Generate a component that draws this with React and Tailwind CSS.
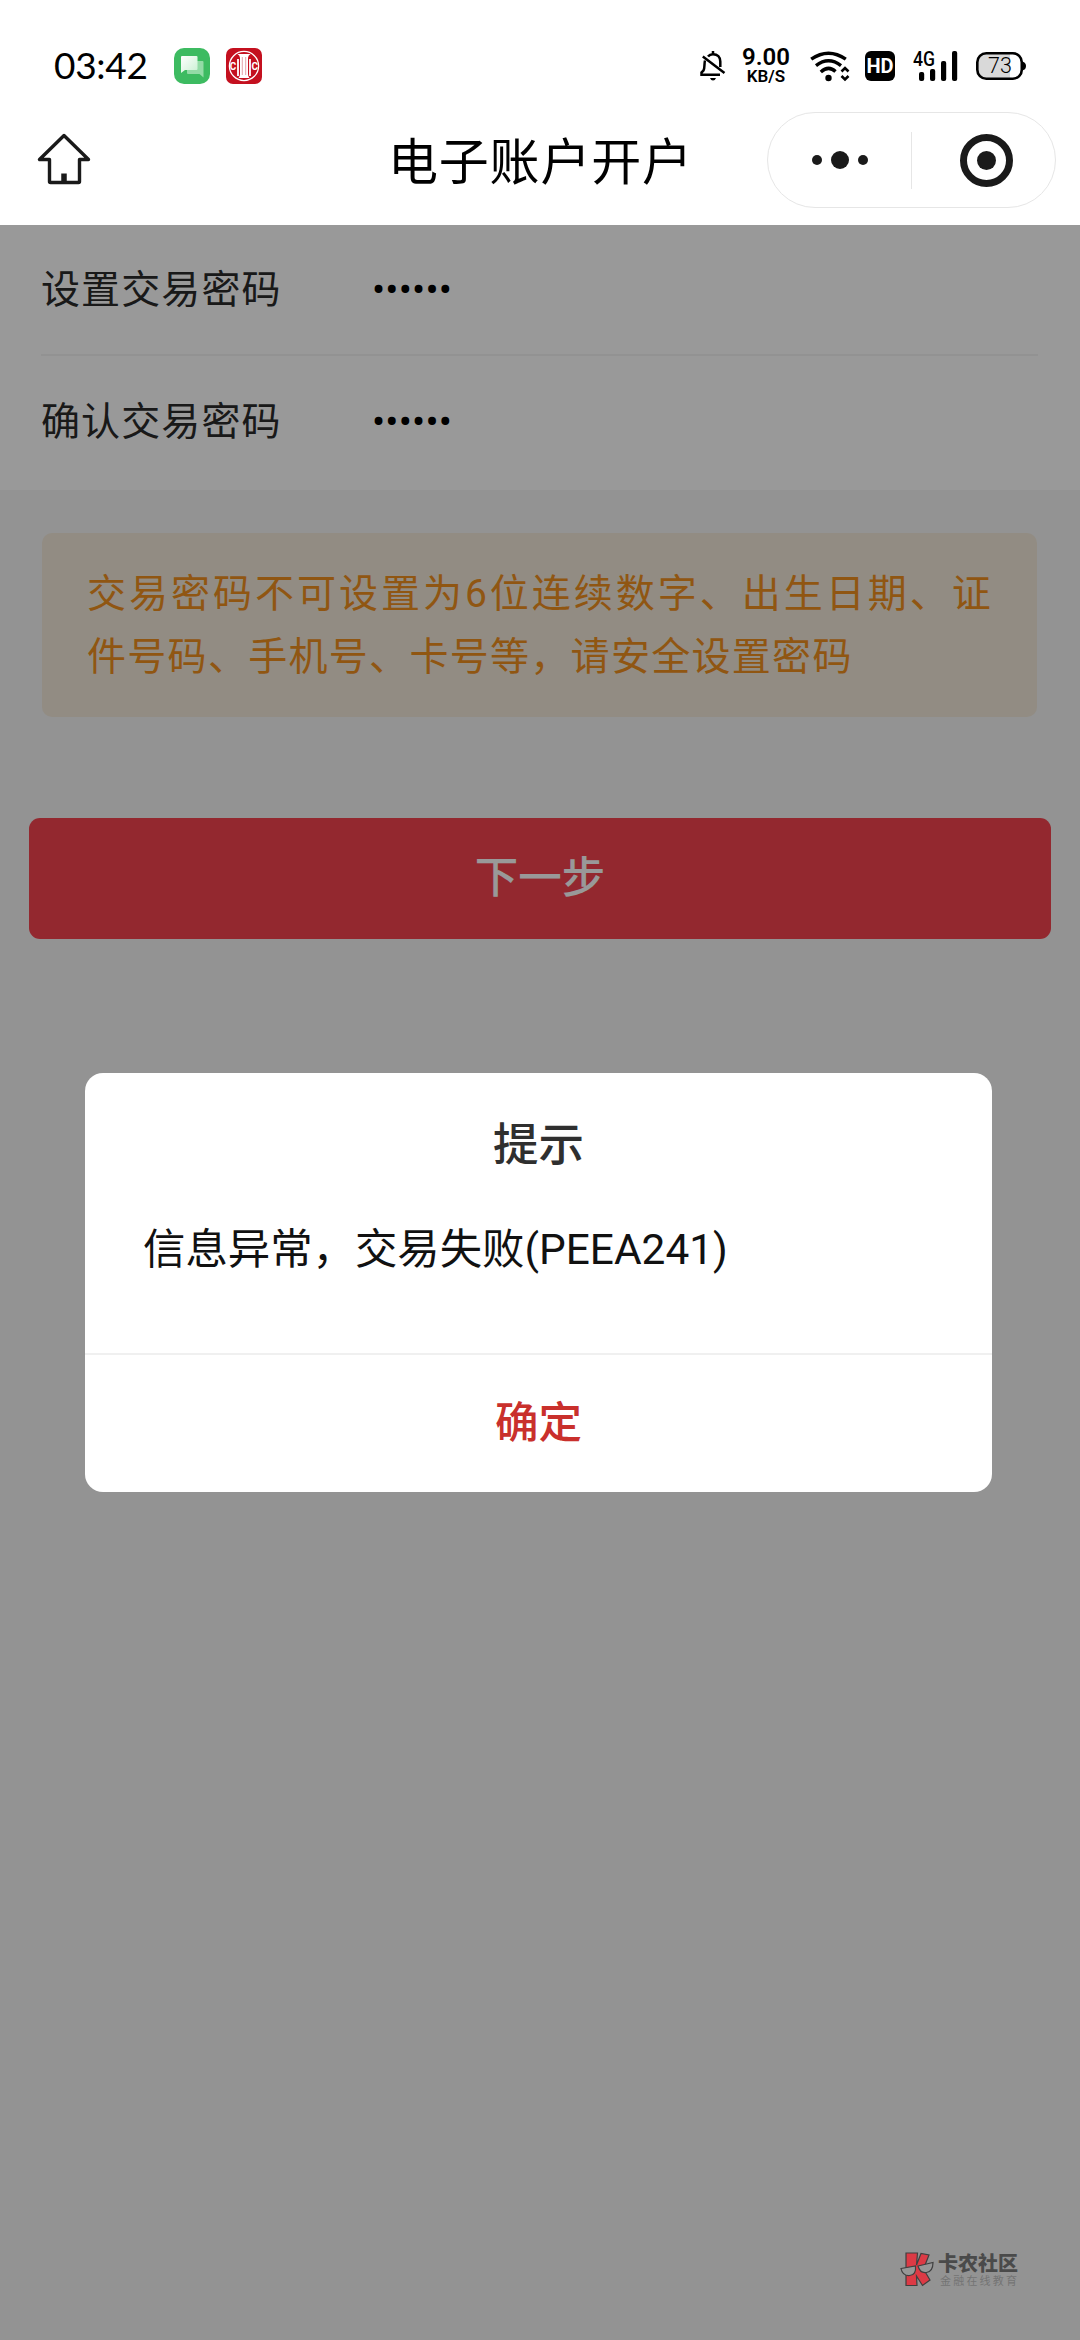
import React, { useState } from 'react';

// ── Status bar icons ──────────────────────────────────────────────────────────
function MessageIcon() {
  return (
    <svg viewBox="0 0 36 36" className="w-9 h-9">
      <defs>
        <linearGradient id="bubble" x1="0" y1="0" x2="1" y2="1">
          <stop offset="0" stopColor="#ffffff" />
          <stop offset="1" stopColor="#c9f0d2" />
        </linearGradient>
      </defs>
      <rect width="36" height="36" rx="10" fill="#3dbb61" />
      <path d="M14 13h14.500q1 0 1 1v15.500l-4-3.500H14q-1 0-1-1V14q0-1 1-1z" fill="#93dba6" />
      <path d="M8 8h14.500q1 0 1 1v12q0 1-1 1H11l-4 3V9q0-1 1-1z" fill="url(#bubble)" />
    </svg>
  );
}

function BankIcon() {
  return (
    <svg viewBox="0 0 36 36" className="w-9 h-9">
      <rect width="36" height="36" rx="7" fill="#c4101f" />
      <circle cx="18" cy="18" r="14.600" fill="none" stroke="#fff" strokeWidth="1.300" />
      <path d="M11.500 6h13q-2.500 1.500-2.500 4v16q0 2.500 1.500 4h-11q1.500-1.500 1.500-4V10q0-2.500-2.500-4z" fill="#fff" />
      <path d="M16.300 9v18M19.700 9v18" stroke="#dd8a94" strokeWidth="0.800" />
      <path d="M12 11v17M24 11v17" stroke="#fff" strokeWidth="1.800" />
      <text x="3.800" y="22" fontSize="10.500" textLength="6.500" lengthAdjust="spacingAndGlyphs" fontWeight="700" fill="#fff" fontFamily="Roboto, sans-serif">C</text>
      <text x="25.600" y="22" fontSize="10.500" textLength="6.500" lengthAdjust="spacingAndGlyphs" fontWeight="700" fill="#fff" fontFamily="Roboto, sans-serif">C</text>
    </svg>
  );
}

function MutedBellIcon() {
  return (
    <svg viewBox="0 0 26 30" className="w-[26px] h-[30px]" fill="none" stroke="#000" strokeWidth="2.500">
      <path d="M5 9.500C4 13 5 17 3.500 19.500L1.500 21.500v2.300h18.500" />
      <path d="M8 5.500C9.500 3.500 11 3.200 13 3.200c4.500 0 7.300 3 7.300 7.300V16" />
      <path d="M13 0v3.500M2.800 5.500L24.500 22" />
      <path d="M10 27h6q-1 2.500-3 2.500T10 27z" fill="#000" stroke="none" />
    </svg>
  );
}

function WifiIcon() {
  return (
    <svg viewBox="0 0 40 31" className="w-10 h-[31px]" fill="none" stroke="#000" strokeWidth="3.400">
      <path d="M1.200 8.200Q18.500-3.800 35.800 8.200" />
      <path d="M6 14.700Q18.500 5 31 14.700" />
      <path d="M10.800 21Q18.500 14 25.500 20.500" />
      <circle cx="18.500" cy="27" r="3.200" fill="#000" stroke="none" />
      <path d="M31.500 20.500l3.500-3.500 3.500 3.500M31.500 25l3.500 3.500 3.500-3.500" strokeWidth="2.600" />
    </svg>
  );
}

function SignalIcon() {
  return (
    <svg viewBox="0 -6 46 44" className="w-[46px] h-11">
      <text x="0" y="15.500" fontSize="20" fontWeight="500" textLength="22" lengthAdjust="spacingAndGlyphs" fontFamily="Roboto, sans-serif">4G</text>
      <rect x="6" y="22" width="5.200" height="9" rx="2" />
      <rect x="17" y="19" width="5.200" height="12" rx="2" />
      <rect x="28" y="11" width="5.200" height="20" rx="2" />
      <rect x="39" y="1" width="5.200" height="30" rx="2" />
    </svg>
  );
}

function BatteryIcon() {
  return (
    <svg viewBox="0 0 50 28" className="w-[50px] h-7">
      <rect x="1.300" y="1.300" width="44.500" height="25.400" rx="9" fill="#fff" />
      <path d="M10 1.300h24v25.400H10a8.700 8.700 0 0 1-8.700-8.700v-8A8.700 8.700 0 0 1 10 1.300z" fill="#d9d9d9" />
      <rect x="1.300" y="1.300" width="44.500" height="25.400" rx="9" fill="none" stroke="#000" strokeWidth="2.600" />
      <path d="M46.500 9.500q3.500 1 3.500 4.500t-3.500 4.500z" />
      <text x="24" y="21.400" fontSize="21.500" fontWeight="300" textAnchor="middle" textLength="24" fontFamily="Roboto, sans-serif">73</text>
    </svg>
  );
}

// ── Header ────────────────────────────────────────────────────────────────────
function StatusBar() {
  return (
    <div className="h-[88px] pt-11 flex items-center text-black">
      <div className="w-full h-11 flex items-center">
        <span className="ml-[54px] w-[96px] pb-[3px] font-[Lato] text-[37px] leading-none tracking-[-0.3px] whitespace-nowrap">03:42</span>
        <div className="ml-6 flex gap-4">
          <MessageIcon />
          <BankIcon />
        </div>
        <div className="ml-[438px]"><MutedBellIcon /></div>
        <div className="ml-[15px] w-[50px] flex flex-col items-center font-[Roboto]">
          <span className="text-[24px] leading-[20px] font-semibold">9.00</span>
          <span className="text-[17px] leading-[18px] font-semibold">KB/S</span>
        </div>
        <div className="ml-[19px]"><WifiIcon /></div>
        <div className="ml-[15px] size-[30px] rounded-[6px] bg-black text-white font-[Roboto] font-bold text-[20px] flex items-center justify-center">
          HD
        </div>
        <div className="ml-[18px]"><SignalIcon /></div>
        <div className="ml-[17px]"><BatteryIcon /></div>
      </div>
    </div>
  );
}

function HomeIcon() {
  return (
    <svg viewBox="0 0 54 52" className="w-[54px] h-[52px]" fill="none" stroke="#1a1a1a" strokeWidth="3.400" strokeLinejoin="round">
      <path d="M27 2.500L2.500 26.500H12.500V48.500q0 1 1 1h28q1 0 1-1V26.500H51.500z" />
      <path d="M27 40.500v8" strokeWidth="5.500" />
    </svg>
  );
}

function NavBar() {
  return (
    <div className="h-[137px] pt-[5px] flex items-center">
      <div className="w-[388px] pl-[37px] pb-px"><HomeIcon /></div>
      <h1 className="w-[379px] pt-[7px] text-[50px] leading-[60px] tracking-[0.8px] text-black whitespace-nowrap">电子账户开户</h1>
      <div className="w-[289px] h-24 mt-[6px] mb-1 rounded-full border border-[#e6e6e6] flex items-center">
        <div className="w-[143px] flex items-center justify-center gap-[9px]">
          <i className="size-[10px] rounded-full bg-[#1a1a1a]" />
          <i className="size-[18px] rounded-full bg-[#1a1a1a]" />
          <i className="size-[10px] rounded-full bg-[#1a1a1a]" />
        </div>
        <div className="w-px h-[57px] bg-[#e6e6e6]" />
        <div className="flex-1 flex justify-center pl-[5px]">
          <div className="size-[53px] rounded-full border-[7px] border-[#1a1a1a] flex items-center justify-center">
            <i className="size-[19px] rounded-full bg-[#1a1a1a]" />
          </div>
        </div>
      </div>
    </div>
  );
}

// ── Form ──────────────────────────────────────────────────────────────────────
function PasswordRow({ label, value }) {
  return (
    <div className="flex items-center h-[129px] pt-[2px] text-[39px] tracking-[1.1px]">
      <label className="w-[331px] text-[#2b2b2b]">{label}</label>
      <span className="font-[Roboto] tracking-[0.2px] text-black">{'•'.repeat(value.length)}</span>
    </div>
  );
}

function PasswordForm() {
  return (
    <main className="bg-[#f5f5f5] h-full">
      <section className="bg-white pl-[41px] pr-[42px] h-[265px]">
        <PasswordRow label="设置交易密码" value="000000" />
        <div className="h-[2px] mb-px bg-[#f3f3f3]" />
        <PasswordRow label="确认交易密码" value="000000" />
      </section>
      <div className="mt-[43px] ml-[42px] mr-[43px] h-[184px] rounded-[10px] bg-[#f3eadb] px-[45px] pt-[30px]">
        <p className="text-[39px] leading-[63px] tracking-[1.3px] text-justify text-[#f0901e]">
          交易密码不可设置为6位连续数字、出生日期、证件号码、手机号、卡号等，请安全设置密码
        </p>
      </div>
      <button className="block mt-[101px] mx-[29px] w-[1022px] h-[121px] pt-px rounded-[11px] bg-[#f5434f] text-white text-[43.5px] font-medium">
        下一步
      </button>
    </main>
  );
}

// ── Dialog ────────────────────────────────────────────────────────────────────
function AlertDialog({ title, message, onConfirm }) {
  return (
    <div className="absolute inset-0 bg-black/40 flex items-center justify-center">
      <div className="w-[907px] h-[419px] -ml-[3px] rounded-[18px] bg-white flex flex-col">
        <h2 className="mt-[41px] text-center text-[45.5px] leading-[64px] font-medium text-[#2f2f2f]">{title}</h2>
        <p className="mt-[40px] pl-[58px] text-[42.4px] leading-[64px] text-[#111]">{message}</p>
        <button
          onClick={onConfirm}
          className="mt-auto h-[139px] border-t-2 border-[#f0f0f0] text-[43.5px] font-medium text-[#c9302c]"
        >
          确定
        </button>
      </div>
    </div>
  );
}

function Watermark() {
  return (
    <div className="absolute left-[900px] top-[2251px] flex items-center gap-1">
      <svg viewBox="0 0 34 38" className="w-[34px] h-[38px]">
        <g fill="#dc3a45" stroke="#3f3f3f" strokeWidth="1.200">
          <path d="M6 2h11.500l-1 12L21 2.500l8 1.500-5.500 14L30 29l-7.500 5.500L16.500 25l.5 9.500H6z" />
        </g>
        <path d="M1 17.500l14.500-2.500q1 9-6 9.500T1 17.500zM18 15l15-3.500q0 9-6.500 10T18 15z" fill="#979797" stroke="#3f3f3f" strokeWidth="1.200" />
      </svg>
      <div className="pt-[2px] whitespace-nowrap">
        <div className="text-[20px] leading-[21px] font-black text-[#4a4a4a]">卡农社区</div>
        <div className="pl-[2px] text-[11px] leading-[14px] tracking-[2.2px] text-[#747474]">金融在线教育</div>
      </div>
    </div>
  );
}

// ── Root ──────────────────────────────────────────────────────────────────────
export default function App() {
  const [open, setOpen] = useState(true);

  return (
    <div className="relative w-[1080px] h-[2340px] overflow-hidden flex flex-col bg-white font-[Roboto,'Noto_Sans_CJK_SC',sans-serif]">
      <header className="h-[225px] shrink-0">
        <StatusBar />
        <NavBar />
      </header>
      <div className="relative flex-1">
        <PasswordForm />
        {open && (
          <AlertDialog title="提示" message="信息异常，交易失败(PEEA241)" onConfirm={() => setOpen(false)} />
        )}
      </div>
      <Watermark />
    </div>
  );
}
